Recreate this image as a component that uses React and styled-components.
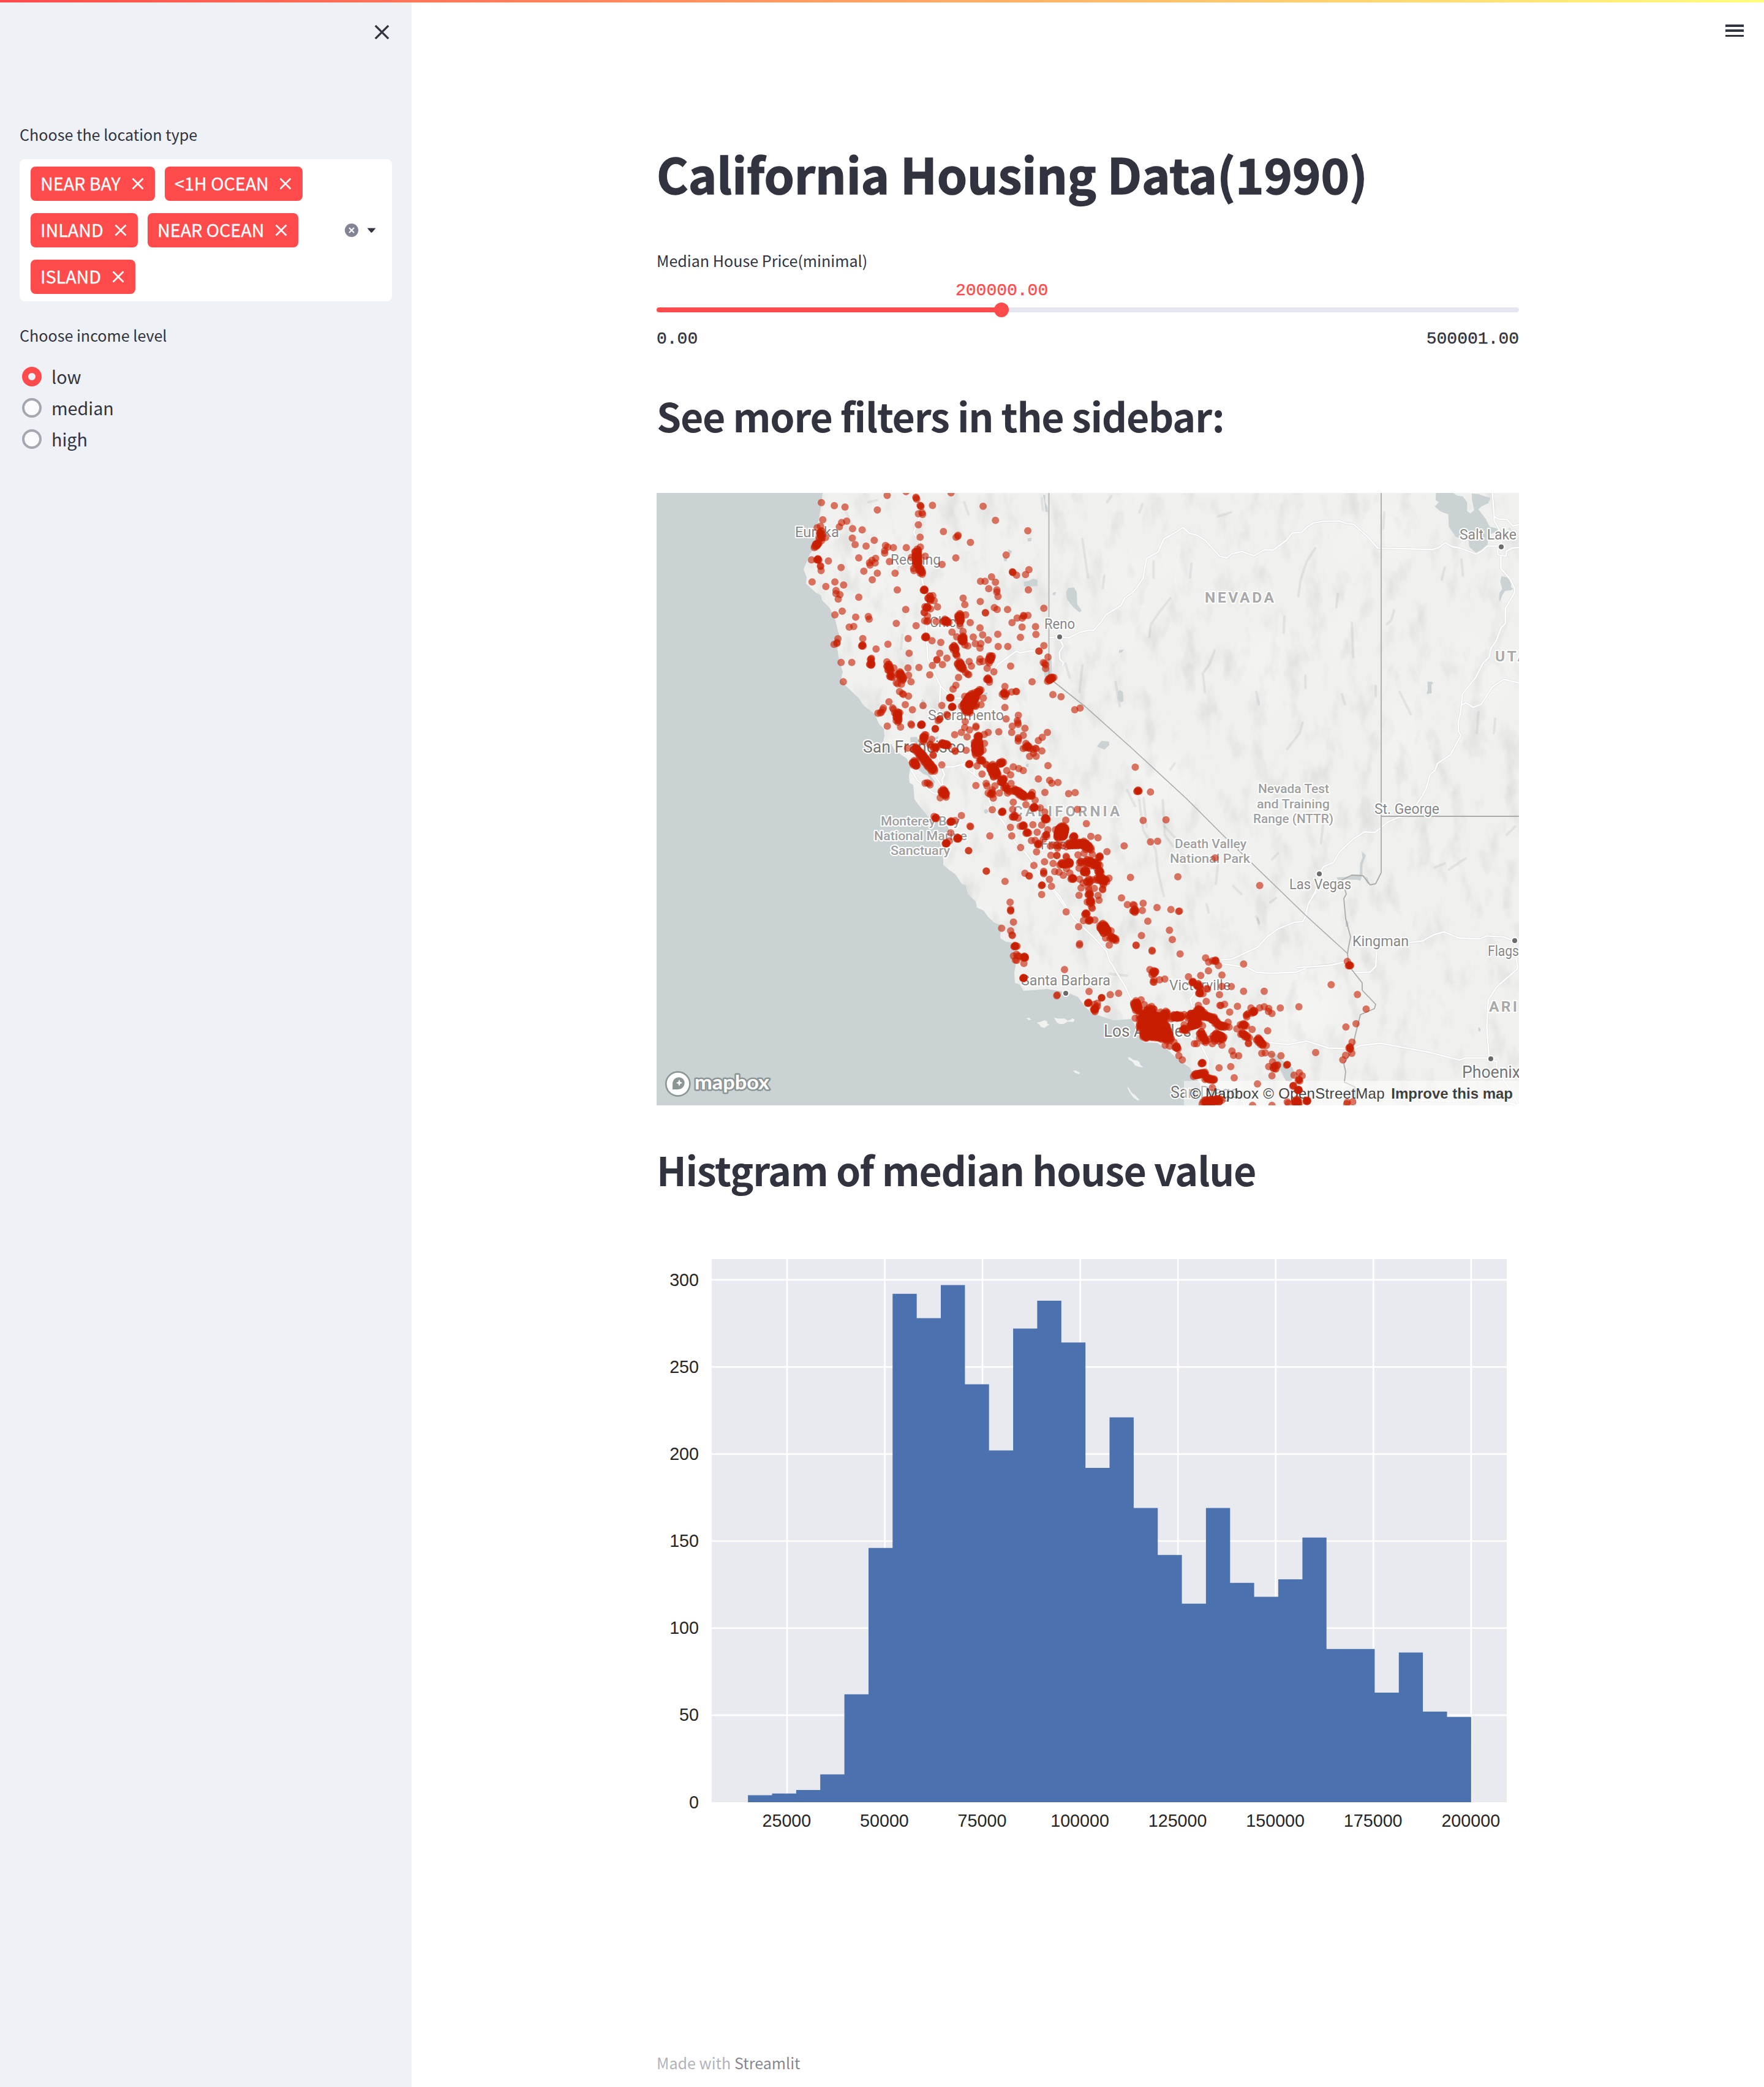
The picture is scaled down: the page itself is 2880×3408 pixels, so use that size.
import React from "react";
import styled, { createGlobalStyle } from "styled-components";

const sans = `"Noto Sans CJK SC", "Noto Sans", sans-serif`;
const ink = "#31333f";
const red = "#ff4b4b";

const GlobalStyle = createGlobalStyle`
  *, *::before, *::after { box-sizing: border-box; }
  body { margin: 0; background: #fff; color: ${ink}; font-family: ${sans}; }
`;

/* ---------- page frame ---------- */

const Page = styled.div`
  position: relative;
  display: flex;
  width: 2880px;
  height: 3408px;
  overflow: hidden;
  background: #fff;
`;

const Decoration = styled.div`
  position: absolute;
  inset: 0 0 auto 0;
  height: 4px;
  z-index: 2;
  background: linear-gradient(90deg, #ff4b4b, #fffd80);
`;

const Sidebar = styled.aside`
  width: 672px;
  flex: none;
  padding: 32px;
  background: #eef1f6;
`;

const SidebarHeader = styled.div`
  display: flex;
  justify-content: flex-end;
  height: 167px;
  padding: 8px 4px 0 0;
`;

const Main = styled.main`
  flex: 1;
  display: flex;
  flex-direction: column;
  padding: 0 400px 20px;
  position: relative;
`;

const MenuButton = styled.div`
  position: absolute;
  top: 40px;
  right: 33px;
  width: 30px;
  height: 20px;
  display: flex;
  flex-direction: column;
  justify-content: space-between;
`;

const MenuLine = styled.span`
  height: 3.5px;
  background: ${ink};
`;

/* ---------- text ---------- */

const Title = styled.h1`
  margin: 230px 0 0;
  height: 106px;
  font-size: 79px;
  line-height: 106px;
  font-weight: 700;
  letter-spacing: -0.09px;
  -webkit-text-stroke: 1.4px currentColor;
  white-space: nowrap;
`;

const Heading = styled.h2`
  margin: ${(p) => p.$top}px 0 0;
  height: 86px;
  font-size: 64.4px;
  line-height: 86px;
  font-weight: 600;
  letter-spacing: -1.27px;
  white-space: nowrap;
`;

const Label = styled.div`
  margin-top: ${(p) => p.$top || 0}px;
  height: 40px;
  font-size: 25.1px;
  line-height: 40px;
`;

const Footer = styled.footer`
  margin-top: auto;
  height: 40px;
  font-size: 25.1px;
  line-height: 40px;
  color: rgba(49, 51, 63, 0.4);
`;

const FooterLink = styled.span`
  color: rgba(49, 51, 63, 0.6);
`;

/* ---------- sidebar widgets ---------- */

const MultiSelect = styled.div`
  display: flex;
  align-items: center;
  height: 232px;
  margin: 21px 0 27px;
  padding: 12px 26px 12px 18px;
  border-radius: 8px;
  background: #fff;
`;

const Tags = styled.div`
  flex: 1;
  display: flex;
  flex-wrap: wrap;
  gap: 20px 16px;
`;

const Tag = styled.span`
  display: flex;
  align-items: center;
  justify-content: space-between;
  width: ${(p) => p.$width}px;
  height: 56px;
  padding: 0 18px 0 16px;
  border-radius: 8px;
  background: ${red};
  color: #fff;
  font-size: 28.7px;
  line-height: 54px;
  white-space: nowrap;
`;

const TagText = styled.span`
  height: 56px;
  -webkit-text-stroke: 0.3px currentColor;
`;

const SelectActions = styled.div`
  display: flex;
  align-items: center;
  gap: 14px;
`;

const RadioGroup = styled.div`
  display: flex;
  flex-direction: column;
  margin-top: 22px;
`;

const Radio = styled.div`
  display: flex;
  align-items: center;
  gap: 16px;
  height: 51px;
  padding-left: 4px;
  font-size: 28.7px;
  line-height: 51px;
`;

const RadioMark = styled.span`
  width: 32px;
  height: 32px;
  border-radius: 50%;
  border: ${(p) => (p.$on ? `10px solid ${red}` : "4px solid #a4a6b0")};
  background: ${(p) => (p.$on ? "#eef1f6" : "#fafafc")};
`;

function Cross({ size, stroke, color = "currentColor" }) {
  return (
    <svg width={size} height={size} viewBox="0 0 20 20" stroke={color} strokeWidth={stroke} fill="none">
      <path d="M1.5 1.5 18.5 18.5M18.5 1.5 1.5 18.5" />
    </svg>
  );
}

/* ---------- slider ---------- */

const SliderValueRow = styled.div`
  margin-top: 10px;
  height: 40px;
  padding-left: 488px;
  font: 28px/40px "Liberation Mono", monospace;
  -webkit-text-stroke: 0.4px currentColor;
  color: ${red};
`;

const Track = styled.div`
  margin-top: 7px;
  height: 8px;
  border-radius: 4px;
  display: flex;
  align-items: center;
  background: linear-gradient(90deg, ${red} 40%, #e3e6ef 40%);
`;

const Thumb = styled.span`
  width: 24px;
  height: 24px;
  margin-left: 551px;
  border-radius: 50%;
  background: ${red};
`;

const SliderBounds = styled.div`
  display: flex;
  justify-content: space-between;
  margin-top: 24px;
  height: 40px;
  font: 28px/40px "Liberation Mono", monospace;
  -webkit-text-stroke: 0.4px currentColor;
`;

/* ---------- map ---------- */

const MapFrame = styled.div`
  position: relative;
  flex: none;
  width: 1408px;
  height: 1000px;
  margin-top: 84px;
  overflow: hidden;
  background: #cad2d3;
`;

const MapCanvas = styled.svg`
  display: block;
`;

const DotLayer = styled.svg`
  position: absolute;
  inset: 0;
`;

const Logo = styled.svg`
  position: absolute;
  left: 10px;
  bottom: 10px;
`;

const Attribution = styled.div`
  position: absolute;
  right: 0;
  bottom: 0;
  width: 547px;
  height: 40px;
  display: flex;
  justify-content: space-between;
  padding: 0 10px 0 10px;
  background: rgba(255, 255, 255, 0.5);
  color: rgba(0, 0, 0, 0.75);
  font: 24px/42px "Liberation Sans", Arial, sans-serif;
  white-space: nowrap;
`;

const Credits = styled.span`
  letter-spacing: 0.32px;
`;

const MapText = styled.text`
  font-family: Roboto, sans-serif;
  font-size: ${(p) => p.$size}px;
  font-weight: ${(p) => p.$weight || 400};
  fill: ${(p) => p.$color};
  stroke: #fff;
  stroke-width: 4px;
  stroke-linejoin: round;
  paint-order: stroke;
`;

const SHEETS = {
  north: { x: -12, y: -5, sx: 2.1778, sy: 3 },
  east: { x: 708, y: -5, sx: 2.1778, sy: 3 },
  centre: { x: 328, y: 195, sx: 3, sy: 3 },
  south: { x: 588, y: 485, sx: 3, sy: 3 },
  coast: { x: -12, y: 495, sx: 2.1778, sy: 3 },
  desert: { x: 708, y: 495, sx: 2.1778, sy: 3 },
};

const sheetTransform = (name) => {
  const s = SHEETS[name];
  return `translate(${s.x} ${s.y}) scale(${1 / s.sx} ${1 / s.sy})`;
};

const POINTS = {
  north: `846,27 913,8 1073,14 949,40 951,46 948,36 965,78 966,82 963,76 1007,76 1187,80 957,117 970,112 972,120 1231,149 957,171
    612,62 658,77 696,84 811,98 617,146 702,153 684,160 676,181 609,178 597,185 723,190 757,196 722,236 800,247 732,268 771,275
    627,233 587,283 604,235 840,272 848,280 868,283 914,283 837,298 837,310 745,333 805,335 792,345 803,358 783,357 785,368 854,351
    577,343 637,348 609,372 609,375 611,395 682,380 763,398 811,408 874,408 793,440 579,451 660,451 628,473 691,466 664,493 664,508
    678,513 672,535 745,526 882,490 686,594 963,232 964,280 1046,204 1098,222 1097,227 1091,232 1142,257 1346,200 1269,319 1090,333
    1041,365 981,325 932,331 940,385 941,395 1350,391 1338,415 1292,403 1293,405 1291,401 1306,418 1217,426 1231,452 1194,448 1178,448
    1207,484 1236,490 1236,500 1240,522 1348,490 1008,518 1013,543 1116,530 1122,562 1177,547 980,572 1000,583 1025,573 979,602
    912,586 1227,577 1237,586 1274,586 1403,580 1195,601 660,612 734,623 711,672 727,669 671,729 668,748 667,752 657,757 682,845
    720,845 690,940`,
  centre: `53,20 57,33 190,54 287,65 326,0 343,18 329,41 345,41 340,45 385,44 502,65 530,12 552,50 463,97 517,94 486,120 567,121
    600,76 613,110 640,135 687,107 689,167 736,167 627,3 577,153 604,153 600,175 540,164 526,160 513,145 757,50 782,28 807,28 815,18
    813,15 835,15 806,72 872,70 874,108 798,122 485,205 487,212 481,205 365,139 408,147 248,128 149,156 91,179 26,128 253,200
    403,200 389,231 389,233 438,224 367,260 416,256 354,306 301,270 247,272 250,308 262,340 144,242 178,272 190,345 197,350 215,352
    206,388 220,398 225,402 250,410 547,241 558,263 600,228 598,243 614,240 645,248 635,274 668,291 540,303 545,305 530,295 495,319
    482,357 468,376 646,342 750,263 913,163 888,190 890,190 933,219 910,246 917,250 921,257 921,275 855,340 957,403 997,413 722,363
    722,412 755,390 776,387 779,388 722,466 728,522 788,504 783,530 785,540 787,548 758,557 755,588 820,568 812,602 788,620 787,630
    788,614 930,588 905,612 886,628 1064,477 1090,469 413,456 525,412 616,420 605,452 438,500 440,505 400,525 395,530 404,522
    381,570 380,572 382,569 234,452 269,477 321,457 154,438 172,468 176,475 127,468 124,477 117,488 112,493 100,494 207,492 182,493
    146,557 211,562 262,547 265,552 528,535 525,564 549,576 580,557 580,563 509,588 476,599 537,610 621,598 640,588 692,585 622,642
    532,676 477,677 479,681 615,675 580,700 363,622 355,650 357,646 370,698 371,700 245,665 413,747 585,752 628,743 633,748
    731,775 763,757 790,765 812,775 750,796 610,792 580,848 630,838 634,850 673,850 752,838 660,870 640,885 695,885 665,910 735,885
    763,930 886,816 941,823 952,837 982,833 933,751 860,672 875,668 872,665 903,679 862,690 843,705 875,705 825,642 812,667 331,837
    342,835 350,838 355,845 405,908 434,905 660,967 760,965 509,995 375,1000 478,1020 551,1047 554,1050 749,1053`,
  south: `76,12 90,50 138,12 254,18 286,13 655,10 45,72 115,88 137,108 297,95 7,138 122,172 79,170 17,178 100,207 152,195 240,148
    341,165 619,149 731,146 190,195 363,227 398,234 72,248 90,247 130,242 97,303 19,282 165,275 180,270 200,270 205,275 200,285
    215,270 442,302 526,274 655,254 690,251 167,320 196,320 197,322 242,325 243,330 300,318 330,310 370,315 136,352 178,360 84,370
    305,383 186,400 207,403 132,398 132,405 132,410 40,408 60,420 62,422 228,418 260,407 243,385 160,438 170,472 122,512 308,437
    325,455 373,440 452,432 425,465 420,485 421,488 380,482 315,480 350,475 353,490 305,516 398,517 403,540 345,548 367,575 370,580
    327,640 382,637 242,597 303,670 307,760 308,753 435,725 462,690 453,760 513,529 542,562 570,562 575,565 619,555 615,590 687,576
    755,586 793,595 797,593 642,643 748,687 611,713 762,733 584,760 585,762 663,785 663,790 800,803 557,428 789,425 971,333 1190,468
    652,880 680,888 700,930 725,926 234,880 196,1008 198,1004 354,987 415,1017 415,1019 417,1018 380,1050 395,1045 395,1060 442,1073
    458,1003 499,996 925,823 940,843 958,837 988,860 1111,853 939,886 841,915 901,909 1005,907 912,998 930,973 935,975 1005,962
    1051,963 1111,986 1212,986 993,1003 928,1036 890,1055 995,1055 1000,1056 1018,1050 1081,1060 1043,1088 1540,954 1382,1062
    1291,1068 1212,1062 1234,1070 1233,1085 1250,1095 1190,1067 1147,1068 609,1028 625,1052 580,1118 705,1088 727,1250 748,1255
    770,1235 794,1302 811,1322 820,1100 785,1100 820,1150 1035,1138 1040,1162 910,1155 895,1215 870,1243 882,1243 945,1220 958,1243
    1005,1250 970,1230 1078,1170 1153,1173 1095,1150 1229,1180 1135,1240 1135,1243 1222,1252 1200,1290 1217,1288 1248,1295 1294,1302
    1054,1279 1062,1300 1087,1302 991,1361 1048,1355 1065,1410 1253,1332 1278,1347 1234,1355 1275,1350 1250,1400 1179,1440 1358,1397
    1384,1385 1398,1400 1464,1286 958,1458 1155,1545 1250,1545 1325,1528 1330,1535 35,850 2,765 5,812 12,815 0,835`,
  coast: `1072,180 1067,220 1135,267 1136,268 1211,195 1289,195 1198,367 1199,368 1265,418 1283,520 1285,555 1285,563 1285,560
    1295,617 1253,647 1285,660 1290,680 1291,683 1295,783 1302,803 1306,775`,
  desert: `914,810 950,972 981,1043 945,1115 909,1131 931,1205 930,1260 908,1270 898,1292 914,1500 912,1508 933,1498`,
  east: `160,1358`,
};

/* x1, y1, x2, y2, spread, count */
const CLUSTERS = {
  north: [
    [610, 200, 612, 245, 8, 12], [600, 262, 592, 275, 8, 12], [598, 338, 601, 345, 5, 6], [952, 295, 955, 370, 12, 34],
    [962, 385, 970, 410, 8, 12], [977, 488, 979, 492, 5, 7], [995, 520, 1000, 545, 9, 8], [987, 573, 989, 580, 6, 6],
  ],
  centre: [
    [425, 38, 442, 50, 9, 14], [500, 10, 503, 45, 10, 20], [515, 120, 517, 145, 10, 16], [470, 165, 480, 185, 9, 12],
    [333, 118, 336, 124, 6, 7], [23, 160, 26, 165, 5, 5], [66, 225, 66, 235, 4, 4], [65, 250, 67, 258, 7, 7],
    [150, 255, 160, 290, 9, 14], [160, 305, 168, 320, 6, 6], [205, 295, 222, 330, 10, 20], [648, 235, 655, 215, 9, 14],
    [497, 245, 514, 278, 11, 22], [636, 322, 642, 332, 6, 6], [935, 333, 957, 320, 8, 14], [712, 395, 728, 400, 8, 7],
    [453, 417, 456, 420, 4, 6], [463, 462, 465, 464, 4, 6], [600, 380, 590, 395, 8, 8], [570, 412, 540, 460, 26, 70],
    [560, 425, 545, 465, 20, 40], [515, 452, 580, 456, 12, 20], [538, 465, 545, 490, 14, 18], [196, 490, 198, 535, 9, 20],
    [313, 549, 314, 552, 5, 7], [592, 605, 592, 612, 7, 9], [588, 635, 592, 690, 18, 50], [330, 600, 322, 630, 8, 12],
    [410, 643, 445, 652, 8, 18], [375, 660, 385, 665, 8, 7], [280, 662, 310, 695, 10, 22], [310, 695, 375, 775, 12, 60],
    [275, 730, 288, 755, 10, 16], [547, 742, 549, 745, 4, 5], [600, 722, 612, 728, 6, 7], [710, 735, 698, 742, 9, 10],
    [660, 755, 680, 800, 16, 44], [715, 815, 705, 835, 8, 14], [655, 885, 662, 890, 9, 5], [720, 850, 740, 875, 8, 9],
    [765, 870, 790, 880, 9, 12], [828, 655, 840, 665, 10, 9], [418, 872, 430, 895, 12, 20], [708, 975, 711, 979, 5, 5],
    [768, 995, 765, 1005, 8, 6], [382, 1005, 386, 1010, 5, 5], [456, 1023, 460, 1028, 6, 6],
  ],
  south: [
    [15, 15, 40, 35, 10, 18], [68, 25, 72, 30, 7, 6], [592, 3, 596, 7, 6, 6], [84, 85, 87, 88, 7, 8], [140, 138, 146, 145, 7, 10],
    [30, 173, 34, 178, 6, 6], [48, 207, 55, 212, 6, 6], [142, 218, 145, 225, 6, 4], [226, 192, 218, 226, 24, 90],
    [278, 228, 282, 232, 7, 8], [104, 262, 108, 268, 5, 5], [250, 270, 320, 265, 13, 34], [325, 260, 358, 290, 15, 30],
    [404, 325, 408, 330, 6, 5], [215, 362, 240, 365, 9, 12], [255, 355, 258, 362, 9, 12], [310, 350, 315, 355, 6, 4],
    [340, 350, 400, 370, 15, 36], [335, 395, 338, 405, 10, 14], [403, 395, 408, 405, 8, 9], [270, 432, 278, 437, 7, 8],
    [122, 466, 124, 468, 3, 3], [350, 440, 355, 455, 12, 7], [400, 430, 435, 450, 15, 24], [355, 508, 357, 515, 7, 6],
    [360, 540, 365, 555, 7, 10], [337, 605, 341, 608, 6, 6], [355, 637, 357, 640, 6, 5], [420, 665, 440, 695, 17, 44],
    [460, 720, 485, 735, 8, 12], [575, 585, 580, 600, 9, 8], [668, 900, 675, 890, 9, 9], [670, 930, 672, 945, 4, 3],
    [350, 1042, 352, 1044, 5, 5], [385, 1065, 380, 1085, 7, 9], [970, 835, 975, 838, 5, 4], [860, 940, 865, 943, 5, 5],
    [885, 950, 895, 970, 8, 9], [895, 990, 897, 1000, 5, 6], [1155, 1090, 1165, 1085, 8, 8], [1130, 1095, 1125, 1110, 6, 4],
    [582, 1040, 595, 1080, 13, 28], [660, 1075, 620, 1160, 22, 80], [615, 1110, 720, 1125, 22, 90], [610, 1150, 690, 1150, 16, 60],
    [628, 1185, 630, 1215, 12, 22], [640, 1178, 700, 1175, 16, 40], [730, 1090, 725, 1110, 12, 14], [640, 1205, 740, 1220, 9, 30],
    [725, 1155, 748, 1225, 16, 40], [780, 1255, 786, 1268, 7, 9], [765, 1112, 805, 1112, 13, 28], [815, 1170, 828, 1178, 8, 9],
    [850, 1108, 915, 1100, 17, 56], [885, 1078, 905, 1085, 10, 16], [900, 1105, 965, 1120, 11, 24], [850, 1158, 890, 1145, 11, 24],
    [885, 1110, 865, 1150, 16, 34], [962, 1120, 990, 1155, 9, 16], [990, 1155, 1022, 1160, 9, 14], [900, 1185, 925, 1235, 9, 20],
    [975, 1205, 1005, 1218, 18, 40], [1105, 1150, 1120, 1155, 9, 9], [1100, 1190, 1135, 1215, 8, 14], [1180, 1218, 1205, 1250, 9, 20],
    [907, 1337, 909, 1340, 5, 6], [1260, 1350, 1265, 1370, 8, 6], [1323, 1345, 1325, 1348, 3, 3], [1380, 1418, 1385, 1424, 4, 4],
    [1353, 1448, 1355, 1450, 3, 3], [1378, 1468, 1381, 1472, 5, 7], [870, 1398, 925, 1388, 9, 26], [925, 1412, 968, 1422, 8, 16],
    [915, 1530, 1000, 1520, 13, 36], [1370, 1520, 1375, 1540, 12, 14], [1420, 1522, 1423, 1525, 5, 7], [36, 818, 39, 822, 7, 9],
    [33, 920, 34, 923, 4, 7],
  ],
  coast: [[1096, 205, 1099, 210, 6, 8], [1055, 230, 1057, 233, 5, 7], [1299, 733, 1302, 738, 5, 6]],
  desert: [[920, 828, 924, 831, 5, 6], [921, 1228, 926, 1240, 5, 5]],
};

function buildDots() {
  const dots = [];
  const place = (s, x, y, dx = 0, dy = 0) => dots.push([s.x + x / s.sx + dx, s.y + y / s.sy + dy]);
  Object.entries(POINTS).forEach(([name, list]) => {
    list.trim().split(/\s+/).forEach((pair) => {
      const [x, y] = pair.split(",").map(Number);
      place(SHEETS[name], x, y);
    });
  });
  Object.entries(CLUSTERS).forEach(([name, list]) => {
    list.forEach(([x1, y1, x2, y2, spread, count]) => {
      for (let i = 0; i < count; i += 1) {
        const t = i / (count - 1);
        const angle = i * 2.39996;
        const r = (spread / 3) * Math.sqrt((i * 0.618 + 0.35) % 1);
        place(SHEETS[name], x1 + (x2 - x1) * t, y1 + (y2 - y1) * t, r * Math.cos(angle), r * Math.sin(angle));
      }
    });
  });
  return dots;
}

const DOTS = buildDots();

const LAND = `M271 0 267 32 263 52 262 72 257 92 251 98 243 117 240 125 245 138 244 148 259 162 268 167 270 175 282 187 286 195
  292 208 296 225 299 235 295 255 298 275 304 292 301 305 309 315 330 335 338 347 356 361 363 377 371 385 372 397 369 410
  383 410 388 419 400 428 408 433 415 445 412 462 413 473 419 477 421 500 428 510 443 528 452 534 462 533 475 545 479 552
  465 562 463 572 468 592 468 607 477 615 488 623 498 638 505 641 508 655 521 667 523 677 534 682 541 692 552 702 562 705
  561 727 571 733 580 734 586 755 586 772 584 783 585 800 593 803 599 813 638 810 668 815 688 823 698 837 711 850 721 853
  746 861 775 859 780 867 788 888 795 897 818 898 835 910 851 925 870 938 878 952 890 968 895 985 896 1000 1408 1000 1408 0Z`;

const ISLANDS = [
  "M46 1118 60 1116 72 1124 60 1128Z M97 1140 120 1135 135 1128 148 1132 150 1145 162 1148 150 1155 135 1166 118 1160 110 1148Z M183 1115 200 1120 235 1120 250 1130 265 1125 272 1118 284 1124 278 1136 250 1135 230 1146 210 1147 195 1138Z",
  "M543 1310 555 1310 570 1322 590 1325 600 1332 605 1345 620 1360 600 1357 580 1350 565 1330 550 1322Z M276 1375 290 1375 310 1385 305 1392 285 1385Z M540 1455 550 1460 560 1480 585 1500 603 1520 590 1520 570 1505 552 1480Z",
];

const LAKES = [
  ["east", "M1230 0 1228 50 1240 60 1225 82 1245 105 1273 120 1275 180 1300 230 1318 238 1340 200 1348 280 1372 308 1412 275 1414 240 1425 215 1450 205 1448 190 1420 180 1405 140 1380 95 1390 82 1415 65 1423 40 1400 30 1380 20 1357 18 1357 45 1365 100 1352 115 1340 105 1340 60 1325 32 1305 28 1290 15Z"],
  ["east", "M1462 422 1482 428 1495 450 1497 478 1504 484 1495 492 1475 495 1465 515 1458 545 1453 540 1455 505 1465 485 1458 450Z"],
  ["east", "M1199 940 1215 940 1220 945 1213 955 1214 996 1196 1000 1200 975Z M103 785 120 782 112 796 102 798Z M98 990 105 980 116 990 118 1035 108 1040 97 1020Z M30 1245 40 1230 66 1232 68 1250 50 1272 24 1258Z"],
  ["north", "M1332 450 1350 445 1365 435 1380 440 1380 470 1345 475 1332 472Z M1490 480 1510 478 1520 500 1522 560 1537 590 1530 600 1508 575 1485 535 1482 500Z M1435 503 1447 500 1443 515 1434 514Z M1345 237 1360 235 1357 252 1346 252Z M1275 290 1290 300 1285 315 1278 312Z M1260 330 1275 330 1270 350 1262 348Z"],
  ["north", "M1400 25 1408 25 1408 60 1416 85 1418 110 1408 105 1405 60Z M1418 825 1430 825 1432 890 1420 925 1405 915 1402 880Z"],
  ["centre", "M258 612 290 610 305 640 345 625 395 606 392 640 345 655 310 650 285 645 260 636Z M283 672 300 690 350 790 380 830 372 842 345 800 320 790 285 760 278 735 300 730Z M316 425 330 435 335 470 306 470Z M622 395 637 392 632 412 620 408Z M620 968 632 962 642 974 630 988 620 980Z M825 745 838 740 838 757 826 757Z"],
  ["south", "M1232 1285 1268 1292 1300 1325 1350 1360 1365 1395 1340 1430 1318 1425 1290 1370 1268 1350Z"],
  ["desert", "M965 270 980 290 968 335 968 385 960 415 950 410 900 408 885 420 875 398 905 397 945 385 958 385 960 330 968 300Z M970 388 985 400 995 433 985 428Z M908 600 918 620 917 640 908 640Z M1380 1130 1388 1140 1386 1155 1380 1150Z"],
];

const ROADS = [
  ["east", "M0 688 12 688 40 645 55 612 110 565 122 530 150 503 165 480 188 432 200 335 242 303 262 240 303 208 330 184 352 212 380 222 410 248 460 325 485 333 505 312 540 302 582 323 620 293 650 295 697 247 718 212 752 208 768 185 793 162 833 153 888 152 912 165 936 168 985 228 1022 285 1217 292 1240 282 1262 258 1285 277 1315 285 1372 314 1390 302 1412 275 1448 275M1430 15 1436 130 1450 142 1482 145 1503 177 1524 170M1436 130 1436 150 1462 215 1460 275M1448 290 1450 318 1478 325 1480 300 1500 285 1524 282M1460 325 1460 385 1492 435 1510 485 1508 505 1476 580 1476 655 1461 675 1443 740 1425 775 1418 820 1396 850 1370 920 1323 1000 1317 1090 1308 1140 1310 1185 1318 1203 1280 1298 1235 1340 1225 1375 1208 1395 1195 1460 1180 1500M1320 1055 1335 1043 1362 1065 1390 1050 1430 965 1470 928 1524 945"],
  ["north", "M932 15 945 50 970 100 940 210 960 250 963 290M968 410 970 440 985 520 985 690 990 830 1035 960 1070 1010M1035 960 1030 1160 1000 1180 1000 1200M1070 1020 1140 1020M1190 960 1240 855 1305 790 1318 798 1360 788 1400 792M1422 725 1450 720M1460 720 1490 725 1530 698 1568 686M1462 735 1472 765 1458 795 1460 830 1472 845 1470 862M1020 1357 1080 1357 1125 1340 1165 1340M1110 1345 1155 1395 1195 1440 1205 1500M1155 1340 1155 1395M1010 1210 1030 1330 1050 1395 1040 1420 1050 1490M930 1370 955 1425 1010 1485 1050 1490M1000 1370 1050 1470"],
  ["coast", "M1205 0 1215 45 1260 130 1300 225 1345 290 1400 415 1440 470 1500 585 1568 675"],
  ["south", "M0 265 45 310 130 430 210 520 280 630 370 715 440 790 455 840 467 855 490 895 530 960 560 1025 590 1040M970 835 1055 828 1180 770 1225 720 1280 680 1360 648 1400 645 1420 610 1430 550 1470 500M1000 850 1130 870 1175 893 1245 898 1370 892 1425 870 1560 852M935 890 920 920 885 980 850 1025 860 1060M1210 1235 1330 1247 1420 1230 1530 1265 1560 1265M850 1210 905 1255 938 1320 935 1390 945 1480M1000 1515 1110 1525 1115 1545"],
  ["desert", "M814 381 830 345 865 325 885 275 935 210 975 175 1012 178 1060 125 1095 105 1130 100 1180 0M814 400 800 470 775 530 765 580M735 840 850 830 915 810M1135 717 1180 710 1220 680 1258 665 1310 695 1385 700 1410 685 1470 690 1505 708M1505 708 1520 845 1445 935 1415 1000 1410 1130 1418 1283M1418 1283 1335 1283 1313 1293 1205 1255 1030 1210 960 1222 940 1237 850 1235M930 865 995 862 1015 835 1018 760M1430 1295 1445 1300 1445 1340 1480 1410 1524 1515M940 1480 1300 1495 1420 1480 1524 1515"],
];

const BORDERS = [
  ["M640.5 0V304M640.5 302 700 349 776 417 866 500 928 562 1060 690 1128 752", 1.6],
  ["M1183 0V620M1183 528H1408", 1.8],
  ["M1183 620 1174 638 1165 640 1153 625 1135 624 1119 632 1126 655 1122 662 1125 695 1133 725 1130 740 1128 752 1130 772 1144 790 1152 800 1152 812 1174 835 1172 842 1149 852 1140 888 1137 908 1122 932 1125 945 1123 962 1140 970 1141 1000", 1.8],
];

const VALLEYS = [
  ["east", "M800 285 770 350 748 440 740 520M443 785 425 850 400 900 408 990M285 530 245 600 215 660 210 720M690 620 688 700M930 650 935 820M1080 590 1070 640 1055 658M880 510 875 575M225 350 225 430M360 360 355 430M1045 110 1042 190M75 30 60 60M185 70 175 110M1100 990 1140 1100M755 1140 745 1190 700 1270M1380 1090 1375 1190M1440 1120 1435 1190M895 1000 905 1050M500 110 455 130M590 990 600 1050M1015 960 1015 1010M1490 190 1510 230M1260 380 1250 440M1320 340 1325 420M90 940 105 1060M50 420 45 480M300 1340 285 1370M765 910 765 970"],
  ["south", "M540 0 580 80M600 50 620 200 680 290 690 390 720 520M715 50 725 220 765 275M985 370 975 460M1060 470 1100 510M1180 630 1185 655M930 560 940 600M1500 170 1490 260M1250 340 1280 310"],
  ["desert", "M1480 190 1510 150M1275 360 1335 305M1225 350 1260 330M590 590 600 620M640 520 660 500M70 870 130 880M190 10 200 150M265 150 340 260"],
  ["north", "M780 60 810 50M1540 240 1560 430M1540 860 1530 990M1480 850 1495 920M900 710 895 780M1120 60 1135 120M1395 40 1400 100M620 730 650 780M895 330 880 420M700 110 720 170"],
];

/* text, x, y, width, size, colour, weight, spacing */
const LABELS = [
  ["Eureka", 226, 72, 72, 23, "#868686"],
  ["Redding", 382, 117, 82, 23, "#868686"],
  ["Chico", 446, 219, 55, 23, "#868686"],
  ["Reno", 633, 222, 50, 23, "#868686"],
  ["Sacramento", 443, 371, 124, 23, "#868686"],
  ["San Francisco", 337, 424, 167, 27, "#747474"],
  ["Monterey Bay", 366, 543, 129, 21, "#9e9e9e", 500],
  ["National Marine", 355, 567, 152, 21, "#9e9e9e", 500],
  ["Sanctuary", 382, 591, 97, 21, "#9e9e9e", 500],
  ["CALIFORNIA", 582, 528, 174, 24, "#a9a9a9", 700, true],
  ["Fresno", 627, 582, 67, 23, "#868686"],
  ["NEVADA", 895, 179, 113, 24.5, "#a9a9a9", 700, true],
  ["UTA", 1369, 275, 53, 24.5, "#a9a9a9", 700, true],
  ["ARI", 1359, 847, 46, 24.5, "#a9a9a9", 700, true],
  ["Salt Lake", 1311, 76, 93, 23, "#868686"],
  ["Nevada Test", 982, 490, 116, 21, "#9e9e9e", 500],
  ["and Training", 980, 515, 119, 21, "#9e9e9e", 500],
  ["Range (NTTR)", 974, 539, 131, 21, "#9e9e9e", 500],
  ["St. George", 1172, 524, 106, 23, "#868686"],
  ["Death Valley", 846, 580, 117, 21, "#9e9e9e", 500],
  ["National Park", 838, 604, 131, 21, "#9e9e9e", 500],
  ["Las Vegas", 1033, 647, 101, 23, "#868686"],
  ["Kingman", 1136, 740, 92, 23, "#868686"],
  ["Flags", 1357, 756, 51, 23, "#868686"],
  ["Phoenix", 1315, 955, 95, 27, "#747474"],
  ["Victorville", 837, 812, 100, 23, "#868686"],
  ["Santa Barbara", 595, 804, 146, 23, "#868686"],
  ["Los Angeles", 730, 888, 143, 27, "#747474"],
  ["San Diego", 839, 988, 112, 27, "#747474"],
];

const TOWNS = [[658, 235], [1379, 88], [1082, 622], [1401, 731], [1362, 924], [668, 817]];

function HousingMap() {
  return (
    <MapFrame>
      <MapCanvas width="1408" height="1000" viewBox="0 0 1408 1000">
        <defs>
          <clipPath id="land"><path d={LAND} /></clipPath>
          <filter id="shade" x="0" y="0" width="100%" height="100%" colorInterpolationFilters="sRGB">
            <feTurbulence type="fractalNoise" baseFrequency="0.034 0.016" numOctaves="4" seed="7" />
            <feColorMatrix values="0 0 0 0 0.4  0 0 0 0 0.41  0 0 0 0 0.43  0.32 0 0 0 -0.165" />
          </filter>
          <filter id="light" x="0" y="0" width="100%" height="100%" colorInterpolationFilters="sRGB">
            <feTurbulence type="fractalNoise" baseFrequency="0.006 0.005" numOctaves="2" seed="21" />
            <feColorMatrix values="0 0 0 0 1  0 0 0 0 1  0 0 0 0 1  0 3 0 0 -1.6" />
          </filter>
        </defs>
        <path d={LAND} fill="#f0f0ee" />
        <g clipPath="url(#land)">
          <rect width="1408" height="1000" filter="url(#light)" opacity="0.35" />
          <rect width="1408" height="1000" filter="url(#shade)" />
          <g fill="none" stroke="#60646a" strokeOpacity="0.1" strokeWidth="4" strokeLinecap="round" strokeLinejoin="round">
            {VALLEYS.map(([sheet, d]) => (
              <path key={sheet} d={d} transform={sheetTransform(sheet)} vectorEffect="non-scaling-stroke" />
            ))}
          </g>
        </g>
        {ISLANDS.map((d) => (
          <path key={d} d={d} fill="#f1f1ef" transform={sheetTransform("south")} />
        ))}
        {LAKES.map(([sheet, d]) => (
          <path key={d} d={d} fill="#cad2d3" transform={sheetTransform(sheet)} />
        ))}
        {ROADS.map(([sheet, d]) => (
          <g key={sheet} transform={sheetTransform(sheet)} fill="none" strokeLinejoin="round">
            <path d={d} stroke="#e0e0e0" strokeWidth="3.8" vectorEffect="non-scaling-stroke" />
            <path d={d} stroke="#fff" strokeWidth="2.2" vectorEffect="non-scaling-stroke" />
          </g>
        ))}
        {BORDERS.map(([d, w]) => (
          <path key={d} d={d} fill="none" stroke="#ababab" strokeWidth={w} strokeLinejoin="round" />
        ))}
        {TOWNS.map(([x, y]) => (
          <circle key={x} cx={x} cy={y} r="5" fill="#6b6b6b" stroke="#fff" strokeWidth="2" />
        ))}
        {LABELS.map(([text, x, y, width, size, color, weight, wide]) => (
          <MapText
            key={text}
            x={x}
            y={y}
            textLength={width}
            lengthAdjust={wide ? "spacing" : "spacingAndGlyphs"}
            $size={size}
            $color={color}
            $weight={weight}
          >
            {text}
          </MapText>
        ))}
      </MapCanvas>
      <Logo width="180" height="50" viewBox="0 0 180 50">
        <circle cx="24.8" cy="25" r="19.6" fill="#fff" stroke="#8c9595" strokeWidth="2.6" />
        <path d="M16 34V25.5C16 18.5 20.5 14.2 26.5 14.2 31.800 14.200 35.600 18.200 35.600 23.300 35.600 29.500 31 34 24 34Z" fill="#8c9595" />
        <path d="M27 17.500 28.400 21.500 32.200 23.200 28.400 24.900 27 28.900 25.500 24.900 21.800 23.200 25.500 21.500Z" fill="#fff" />
        <text
          x="52" y="33.500" textLength="122" lengthAdjust="spacingAndGlyphs"
          fontFamily="Lato, sans-serif" fontWeight="700" fontSize="32"
          fill="#fff" stroke="#8c9595" strokeWidth="5" strokeLinejoin="round" paintOrder="stroke"
        >
          mapbox
        </text>
      </Logo>
      <Attribution>
        <Credits>© Mapbox © OpenStreetMap</Credits>
        <b>Improve this map</b>
      </Attribution>
      <DotLayer width="1408" height="1000" viewBox="0 0 1408 1000">
        <g fill="rgb(200,30,0)" fillOpacity="0.6">
          {DOTS.map(([x, y], i) => (
            <circle key={i} cx={x} cy={y} r="6" />
          ))}
        </g>
      </DotLayer>
    </MapFrame>
  );
}

/* ---------- histogram ---------- */

const ChartCanvas = styled.svg`
  display: block;
  flex: none;
  margin-top: 80px;
`;

const Tick = styled.text`
  font: 28.7px "Liberation Sans", Arial, sans-serif;
  fill: #262626;
`;

const COUNTS = [
  4, 5, 7, 16, 62, 146, 292, 278, 297, 240, 202, 272, 288, 264, 192, 221, 169, 142, 114, 169, 126, 118, 128, 152, 88, 88, 63, 86,
  52, 49,
];

const PLOT = { left: 90, right: 1388, top: 24, bottom: 911 };
const yOf = (v) => PLOT.bottom - v * 2.8435;
const xOf = (v) => 213 + ((v - 25000) / 25000) * 159.55;
const START = 14999;
const STEP = (200000 - START) / COUNTS.length;

function Histogram() {
  const outline = COUNTS.map((c, i) => {
    const a = xOf(START + STEP * i).toFixed(1);
    const b = xOf(START + STEP * (i + 1)).toFixed(1);
    return `L${a} ${yOf(c).toFixed(1)}L${b} ${yOf(c).toFixed(1)}`;
  }).join("");
  const xs = [25000, 50000, 75000, 100000, 125000, 150000, 175000, 200000];
  const ys = [0, 50, 100, 150, 200, 250, 300];
  return (
    <ChartCanvas width="1408" height="978" viewBox="0 0 1408 978">
      <rect x={PLOT.left} y={PLOT.top} width={PLOT.right - PLOT.left} height={PLOT.bottom - PLOT.top} fill="#e9eaf0" />
      <g stroke="#fff" strokeWidth="2.7">
        {xs.map((v) => <line key={v} x1={xOf(v)} x2={xOf(v)} y1={PLOT.top} y2={PLOT.bottom} />)}
        {ys.slice(1).map((v) => <line key={v} x1={PLOT.left} x2={PLOT.right} y1={yOf(v)} y2={yOf(v)} />)}
      </g>
      <path d={`M${xOf(START)} ${PLOT.bottom}${outline}L${xOf(200000)} ${PLOT.bottom}Z`} fill="#4b71ae" />
      {ys.map((v) => <Tick key={v} x="69" y={yOf(v) + 9.6} textAnchor="end">{v}</Tick>)}
      {xs.map((v) => <Tick key={v} x={xOf(v) - 0.6} y="951" textAnchor="middle">{v}</Tick>)}
    </ChartCanvas>
  );
}

/* ---------- app ---------- */

const LOCATIONS = [
  ["NEAR BAY", 203],
  ["<1H OCEAN", 225],
  ["INLAND", 175],
  ["NEAR OCEAN", 246],
  ["ISLAND", 171],
];

export default function App() {
  return (
    <Page>
      <GlobalStyle />
      <Decoration />
      <Sidebar>
        <SidebarHeader>
          <Cross size={25} stroke={2.7} color={ink} />
        </SidebarHeader>
        <Label>Choose the location type</Label>
        <MultiSelect>
          <Tags>
            {LOCATIONS.map(([name, width]) => (
              <Tag key={name} $width={width}>
                <TagText>{name}</TagText>
                <Cross size={20} stroke={2.6} />
              </Tag>
            ))}
          </Tags>
          <SelectActions>
            <svg width="22" height="22" viewBox="0 0 22 22">
              <circle cx="11" cy="11" r="11" fill="#808495" />
              <path d="M7 7 15 15M15 7 7 15" stroke="#fff" strokeWidth="2.200" />
            </svg>
            <svg width="15" height="9" viewBox="0 0 15 9">
              <path d="M0.500 0.500H14.500L8.500 7.500Q7.500 8.300 6.500 7.500Z" fill={ink} />
            </svg>
          </SelectActions>
        </MultiSelect>
        <Label $top={35}>Choose income level</Label>
        <RadioGroup>
          {["low", "median", "high"].map((level) => (
            <Radio key={level}>
              <RadioMark $on={level === "low"} />
              {level}
            </Radio>
          ))}
        </RadioGroup>
      </Sidebar>
      <Main>
        <MenuButton>
          <MenuLine />
          <MenuLine />
          <MenuLine />
        </MenuButton>
        <Title>California Housing Data(1990)</Title>
        <Label $top={69}>Median House Price(minimal)</Label>
        <SliderValueRow>200000.00</SliderValueRow>
        <Track><Thumb /></Track>
        <SliderBounds>
          <span>0.00</span>
          <span>500001.00</span>
        </SliderBounds>
        <Heading $top={61}>See more filters in the sidebar:</Heading>
        <HousingMap />
        <Heading $top={61}>Histgram of median house value</Heading>
        <Histogram />
        <Footer>Made with <FooterLink>Streamlit</FooterLink></Footer>
      </Main>
    </Page>
  );
}
